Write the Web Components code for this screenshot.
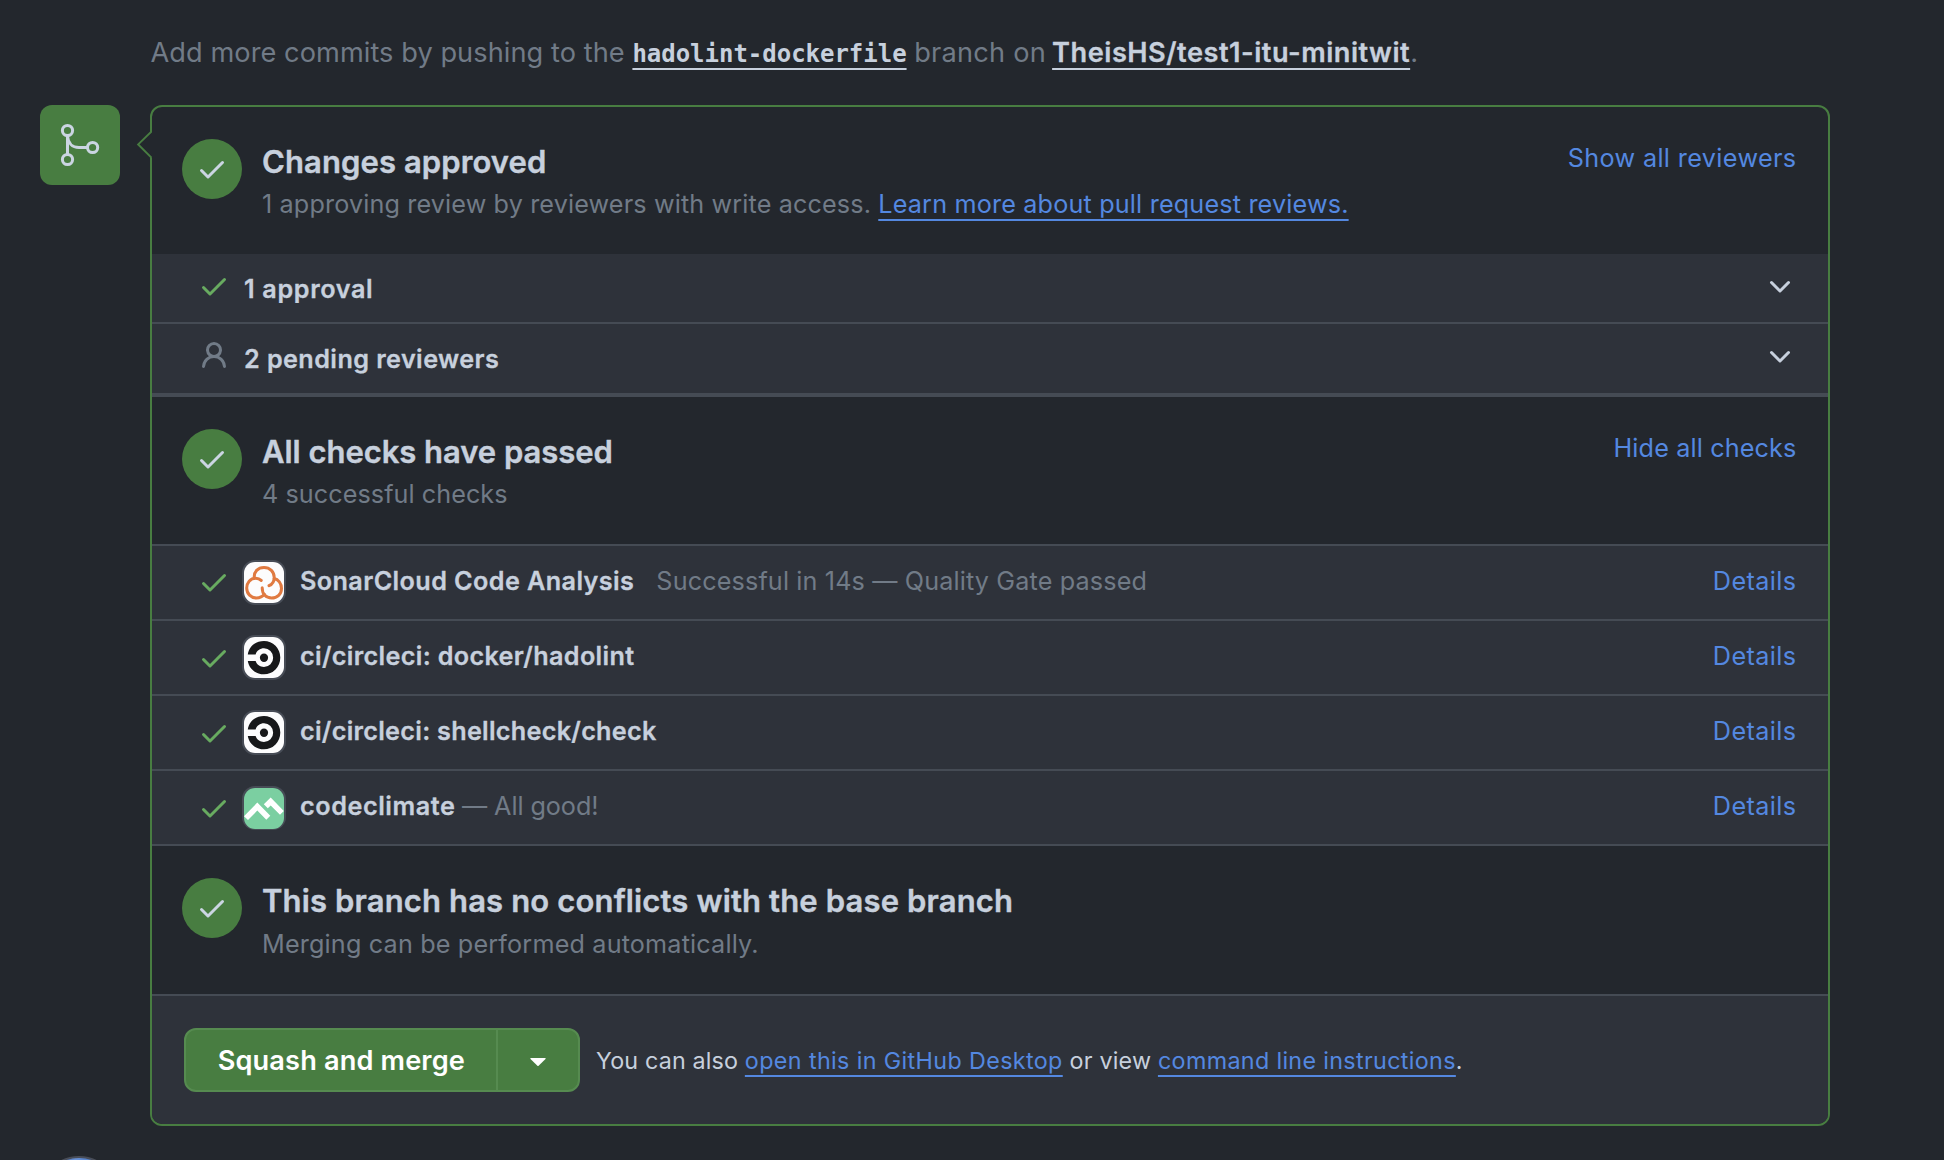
<!DOCTYPE html>
<html lang="en">
<head>
<meta charset="utf-8">
<title>Pull request merge status</title>
<style>
html,body{margin:0;height:1160px;overflow:hidden}
body{background:#23272d}
</style>
</head>
<body>
<merge-page></merge-page>
<script>
const ICONS={
  check:'<path d="M13.78 4.22a.75.75 0 0 1 0 1.06l-7.25 7.25a.75.75 0 0 1-1.06 0L2.22 9.28a.751.751 0 0 1 .018-1.042.751.751 0 0 1 1.042-.018L6 10.94l6.72-6.72a.75.75 0 0 1 1.06 0Z"/>',
  person:'<path d="M10.561 8.073a6.005 6.005 0 0 1 3.432 5.142.75.75 0 1 1-1.498.07 4.5 4.5 0 0 0-8.99 0 .75.75 0 0 1-1.498-.07 6.004 6.004 0 0 1 3.431-5.142 3.999 3.999 0 1 1 5.123 0ZM10.5 5a2.5 2.5 0 1 0-5 0 2.5 2.5 0 0 0 5 0Z"/>',
  chevron:'<path d="M12.78 5.22a.749.749 0 0 1 0 1.06l-4.25 4.25a.749.749 0 0 1-1.06 0L3.22 6.28a.749.749 0 1 1 1.06-1.06L8 8.939l3.72-3.719a.749.749 0 0 1 1.06 0Z"/>'
};
const LOGOS={
  sonar:'<rect width="40" height="40" fill="#fcfcfd"/><g fill="none" stroke="#e07a41" stroke-width="3" stroke-linecap="round"><path d="M10.3 15.8C9.6 9.4 14 5.3 20 5.3C26 5.3 30.2 9.7 30.2 15C30.2 19 28 21.8 25 23.1"/><path d="M17.2 18C15.8 16.6 14 15.8 11.8 15.8C6.2 15.8 2.7 20.3 2.7 25.4C2.7 31 7 35.1 12.4 35.1C15.6 35.1 18.4 34 20.3 31.4"/><path d="M18.2 25.2C18.2 31.4 22 35.1 27.6 35.1C33.3 35.1 37.5 31.2 37.5 25.8C37.5 20.8 34.2 16.8 30.2 16.2"/></g>',
  circleci:'<rect width="40" height="40" fill="#fcfcfd"/><path fill="#17181a" d="M3.8 17C5 9.3 11.7 3.8 20 3.8A16.3 16.3 0 0 1 20 36.4C11.7 36.4 5 31.1 3.8 23.5H11.6C12.8 27 16 29.3 20 29.3A9 9 0 0 0 20 11C16 11 12.8 13.3 11.6 17Z"/><circle cx="20" cy="20.2" r="4.1" fill="#17181a"/>',
  climate:'<rect width="40" height="40" fill="#7bcfa1"/><path fill="#fff" d="M0 27.5L13.3 14.2L26.3 27L22.3 31L13.3 22L4 31.3Z"/><path fill="#fff" d="M19.8 15.9L26.7 9.3L39.8 22.4L36 26.2L26.7 17L23.8 19.8Z"/>'
};
const BASE=`*{box-sizing:border-box}a{color:#5488e0;text-decoration:none}
a.u{text-decoration:underline;text-decoration-thickness:2px;text-underline-offset:6px;text-decoration-skip-ink:none}`;
const define=(name,render)=>customElements.define(name,class extends HTMLElement{
  constructor(){super();this.attachShadow({mode:'open'});}
  connectedCallback(){this.shadowRoot.innerHTML=render(this);}
});

define('octo-icon',e=>`<style>:host{display:block;width:32px;height:32px;flex:none}svg{display:block}</style>
<svg width="32" height="32" viewBox="0 0 16 16" fill="currentColor">${ICONS[e.getAttribute('name')]}</svg>`);

define('app-avatar',e=>`<style>:host{display:block;width:40px;height:41px;flex:none;border-radius:11px;box-shadow:0 0 0 2px #474c56}svg{display:block;border-radius:11px}</style>
<svg width="40" height="41" viewBox="0 0 40 40" preserveAspectRatio="none">${LOGOS[e.getAttribute('logo')]}</svg>`);

define('merge-badge',()=>`<style>:host{display:grid;place-items:center;width:80px;height:80px;flex:none;border-radius:12px;background:#487d41}svg{display:block}</style>
<svg width="48" height="48" viewBox="0 0 48 48" fill="none" stroke="#cbd5e2" stroke-width="3"><circle cx="11.5" cy="9.5" r="5.1"/><circle cx="11.5" cy="38.5" r="5.1"/><circle cx="36.6" cy="26.5" r="5.1"/><path d="M11.5 14.5V33.5M11.5 15C12 21.5 16 26.5 23 26.5H31.6"/></svg>`);

define('status-section',()=>`<style>${BASE}
:host{display:flex;height:147px;padding:0 32px 0 30px}
.disc{display:grid;place-items:center;width:60px;height:60px;margin-top:32px;border-radius:50%;background:#487d41;color:#cbd5e2;flex:none}
.text{flex:1;display:flex;flex-direction:column;gap:var(--gap,2px);padding:35px 0 0 20px}
h3{margin:0;font-size:31px;line-height:40px;font-weight:600;color:#c7d0dd;-webkit-text-stroke:.4px #c7d0dd}
.sub{font-size:25.2px;line-height:40px;color:#717b87}
.act{padding-top:31px;font-size:25.2px;line-height:40px}
::slotted(a){color:#5488e0}
</style><div class="disc"><octo-icon name="check"></octo-icon></div>
<div class="text"><h3><slot name="title"></slot></h3><div class="sub"><slot></slot></div></div>
<div class="act"><slot name="action"></slot></div>`);

define('reviewer-row',e=>`<style>
:host{display:flex;height:70px;padding:0 32px 0 46px;background:#2e323a;border-bottom:2px solid #454b54}
.i{margin-top:16px;color:${e.getAttribute('icon')==='check'?'#68ab60':'#717b87'}}
.t{flex:1;padding:15px 0 0 14px;font-size:25.2px;line-height:40px;font-weight:600;color:#c7d0dd;-webkit-text-stroke:.3px #c7d0dd}
.c{margin-top:17px;color:#c7d0dd}
</style><octo-icon class="i" name="${e.getAttribute('icon')}"></octo-icon><div class="t"><slot></slot></div><octo-icon class="c" name="chevron"></octo-icon>`);

define('check-row',e=>`<style>${BASE}
:host{display:flex;height:75px;padding:0 31.5px 0 46px;background:#2e323a;border-bottom:2px solid #454b54;font-size:25.2px;line-height:40px}
.i{margin-top:21px;color:#68ab60}
:host([first]) .i{margin-top:20px}
app-avatar{margin:16px 0 0 14px}
:host([logo=climate]) app-avatar{margin-top:17px;height:40px}
.t{flex:1;display:flex;padding:15px 0 0 16px}
.n{font-weight:600;color:#c7d0dd;-webkit-text-stroke:.3px #c7d0dd}
.d{color:#717b87}
.a{padding-top:15px;letter-spacing:.4px}
</style><octo-icon class="i" name="check"></octo-icon><app-avatar logo="${e.getAttribute('logo')}"></app-avatar>
<div class="t"><span class="n"><slot></slot></span><span class="d"><slot name="note"></slot></span></div><div class="a"><a>Details</a></div>`);

define('merge-button',()=>`<style>
:host{display:flex;width:396px;height:64px;box-sizing:border-box;border:2px solid #568b50;border-radius:12px;background:#487d41;color:#fff;overflow:hidden}
.m{width:312px;box-sizing:border-box;border-right:2px solid #568b50;padding:1px 0 0 31.7px;font-size:27.2px;line-height:60px;font-weight:600;letter-spacing:.13px;white-space:nowrap}
.c{flex:1;display:grid;place-items:center}svg{display:block;margin-top:3px}
</style><div class="m"><slot></slot></div><div class="c"><svg width="16" height="8" viewBox="0 0 16 8"><path fill="#fff" d="M.8 0H15.2Q16 .4 15.5 1L8.6 7.7Q8 8.2 7.4 7.7L.5 1Q0 .4.8 0Z"/></svg></div>`);

define('merge-box',()=>`<style>
:host{display:block;position:relative;box-sizing:border-box;width:1680px;height:1021px;border:2px solid #487d41;border-radius:12px}
.in{border-radius:10px;overflow:hidden}
.p{position:absolute;left:-16.5px;top:24px}
</style><svg class="p" width="17" height="28" viewBox="0 0 17 28"><path d="M15.6 1L2.4 13.6L15.6 26.6H17V1Z" fill="#23272d"/><path d="M15.4.6L2.2 13.4L15.4 26.6" fill="none" stroke="#487d41" stroke-width="2"/></svg>
<div class="in"><slot></slot></div>`);

define('merge-footer',()=>`<style>:host{display:flex;align-items:center;gap:16px;height:128px;padding-left:32px;background:#2e323a}
.t{padding-top:1px;font-size:23.3px;line-height:40px;color:#c7d0dd;white-space:nowrap}</style>
<slot name="button"></slot><div class="t"><slot></slot></div>`);

define('next-avatar',()=>`<style>:host{position:absolute;left:39px;top:1156px;width:80px;height:4px;overflow:hidden}
svg{display:block}</style>
<svg width="80" height="4" viewBox="0 0 80 4"><defs><linearGradient id="g"><stop offset=".3" stop-color="#3f66a8"/><stop offset=".45" stop-color="#6c95da"/><stop offset=".65" stop-color="#4f7cc6"/></linearGradient></defs><circle cx="40" cy="40" r="39" fill="url(#g)" stroke="#484d58" stroke-width="2"/></svg>`);

define('merge-page',()=>`<style>${BASE}
:host{display:block;font-family:Inter,sans-serif;padding:33px 0 0 40px;white-space:nowrap}
.hint{margin:0 0 32px;padding-left:110.5px;height:40px;font-size:27.2px;line-height:40px;color:#717b87;letter-spacing:.055px}
.hint a{color:#c7d0dd;font-weight:600}
.hint .code{font:bold 24px/1 "DejaVu Sans Mono",monospace;letter-spacing:-.02px}
.row{display:flex;gap:30px}
.line{border-bottom:2px solid #454b54}
</style>
<p class="hint">Add more commits by pushing to the <a class="u code">hadolint-dockerfile</a> <span style="letter-spacing:.2px">branch on</span> <a class="u" style="letter-spacing:.5px;margin-left:-1.5px;-webkit-text-stroke:.3px #c7d0dd">TheisHS/test1-itu-minitwit</a>.</p>
<div class="row"><merge-badge></merge-badge>
<merge-box>
<status-section><span slot="title" style="letter-spacing:.1px">Changes approved</span><span style="letter-spacing:.132px">1 approving review by reviewers with write access. </span><a class="u" style="letter-spacing:.17px">Learn more about pull request reviews.</a><a slot="action" style="letter-spacing:.37px;margin-right:-.5px">Show all reviewers</a></status-section>
<reviewer-row icon="check"><span style="letter-spacing:.65px">1 approval</span></reviewer-row>
<reviewer-row icon="person" style="height:73px;border-bottom-width:4px"><span style="letter-spacing:.43px">2 pending reviewers</span></reviewer-row>
<status-section class="line" style="height:149px"><span slot="title" style="letter-spacing:-.04px">All checks have passed</span><span style="letter-spacing:.06px">4 successful checks</span><a slot="action" style="letter-spacing:.14px;margin-right:-.5px">Hide all checks</a></status-section>
<check-row first logo="sonar"><span style="letter-spacing:.41px">SonarCloud Code Analysis</span><span slot="note" style="margin-left:22px;letter-spacing:.135px">Successful in 14s — Quality Gate passed</span></check-row>
<check-row logo="circleci"><span style="letter-spacing:.34px">ci/circleci: docker/hadolint</span></check-row>
<check-row logo="circleci"><span style="letter-spacing:.29px">ci/circleci: shellcheck/check</span></check-row>
<check-row logo="climate"><span style="letter-spacing:.57px">codeclimate</span><span slot="note" style="margin-left:6.5px;letter-spacing:-.07px">— All good!</span></check-row>
<status-section class="line" style="height:150px;--gap:3px"><span slot="title" style="letter-spacing:.14px">This branch has no conflicts with the base branch</span><span style="letter-spacing:.165px">Merging can be performed automatically.</span></status-section>
<merge-footer><merge-button slot="button">Squash and merge</merge-button><span style="letter-spacing:.157px">You can also </span><a class="u" style="letter-spacing:.38px">open this in GitHub Desktop</a><span style="letter-spacing:.2px"> or view </span><a class="u" style="letter-spacing:.34px">command line instructions</a>.</merge-footer>
</merge-box></div>
<next-avatar></next-avatar>`);
</script>
</body>
</html>
